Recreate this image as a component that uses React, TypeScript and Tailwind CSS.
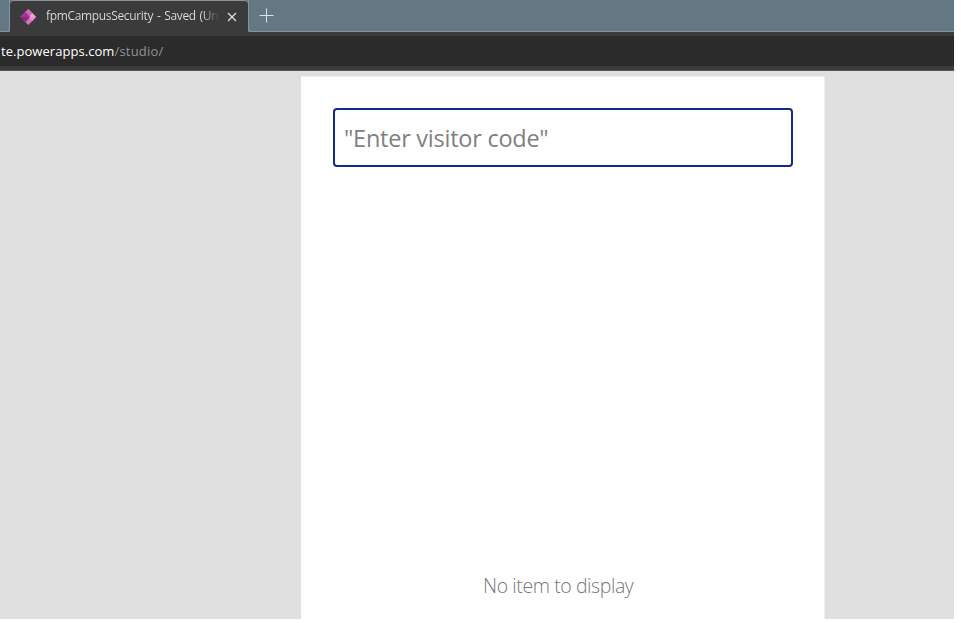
function PowerAppsIcon() {
  return (
    <svg className="h-4 w-4 shrink-0" viewBox="0 0 16 16">
      <path d="M8.5 0L16 8l-7.5 8-4.5-4 4.5-4L4 4z" fill="#d873be" />
      <path d="M8.5 0l3.8 4-3.5 4L4 4z" fill="#cf68b8" />
      <path d="M12.3 4L16 8H9.2z" fill="#f0a2d8" />
      <path d="M9 8h7l-3.7 4z" fill="#e993d0" />
      <path d="M5.3 2.5L10 8H0z" fill="#a5359b" />
      <path d="M0 8h10l-4.7 5.5z" fill="#8d2985" />
    </svg>
  );
}

function TabStrip() {
  return (
    <div className="flex h-8 bg-[#647883]">
      <div className="w-[10px] rounded-br-[3px] border-r border-b border-[#87969e]" />
      <div className="flex w-[238px] items-center rounded-t-[4px] border-t border-[#87969e] bg-[#3b3b3b] pl-[10px]">
        <PowerAppsIcon />
        <span className="mb-[2px] ml-[10px] w-[174px] shrink-0 bg-gradient-to-r from-[#dedede] from-90% to-[#3b3b3b] bg-clip-text text-[12px] leading-5 tracking-[-0.34px] whitespace-nowrap text-transparent [word-spacing:1px]">
          fpmCampusSecurity - Saved (Unp
        </span>
        <svg className="ml-[7px] h-[10px] w-[10px] shrink-0" viewBox="0 0 10 10" stroke="#dedede" strokeWidth="1.3">
          <path d="M1 1l8 8M9 1L1 9" />
        </svg>
      </div>
      <div className="flex flex-1 items-center rounded-bl-[3px] border-b border-l border-[#87969e] pl-[10px]">
        <svg className="h-[15px] w-[15px]" viewBox="0 0 15 15" stroke="#dce1e4" strokeWidth="1">
          <path d="M7.5 0.5v14M0.5 7.5h14" />
        </svg>
      </div>
    </div>
  );
}

export default function App() {
  return (
    <div className="h-[623px] w-[961px] overflow-hidden bg-white font-['Open_Sans','Noto_Sans',sans-serif]">
      <div className="flex h-[619px] w-[954px] flex-col overflow-hidden bg-[#e0e0e0]">
        <div className="h-[71px] shrink-0 border-b border-[#595557] bg-[#3b3b3b]">
          <TabStrip />
          <div className="mt-1 flex h-[30px] items-center bg-[#2b2b2b] pt-[2px] pl-px text-[13px] whitespace-nowrap text-[#929292]">
            <span className="tracking-[0.05px] text-white">te.powerapps.com</span>
            <span className="tracking-[0.2px]">/studio/</span>
          </div>
        </div>
        <div className="mt-[5px] ml-[301px] flex w-[524px] flex-1 flex-col border-t border-r border-[#eeeeee] bg-white px-8 pt-[31px]">
          <div className="flex h-[59px] w-[460px] shrink-0 items-center rounded-[4px] border-2 border-[#142a83] pt-[3px] pl-[9px] text-[23.5px] tracking-[-0.25px] whitespace-nowrap text-[#808080]">
            "Enter visitor code"
          </div>
          <div className="mt-[404px] ml-[150px] text-[19.5px] leading-[30px] font-light tracking-[-0.42px] whitespace-nowrap text-[#777777]">
            No item to display
          </div>
        </div>
      </div>
    </div>
  );
}
